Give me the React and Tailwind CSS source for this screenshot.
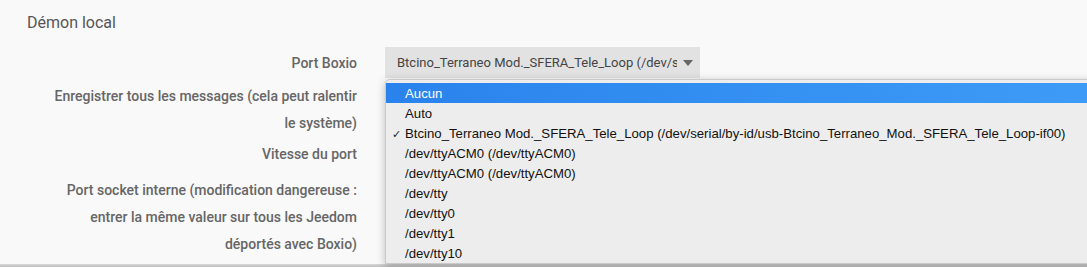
import { useState } from 'react'

const ports = [
  { label: 'Aucun', active: true },
  { label: 'Auto' },
  { label: 'Btcino_Terraneo Mod._SFERA_Tele_Loop (/dev/serial/by-id/usb-Btcino_Terraneo_Mod._SFERA_Tele_Loop-if00)', checked: true },
  { label: '/dev/ttyACM0 (/dev/ttyACM0)' },
  { label: '/dev/ttyACM0 (/dev/ttyACM0)' },
  { label: '/dev/tty' },
  { label: '/dev/tty0' },
  { label: '/dev/tty1' },
  { label: '/dev/tty10' },
]

function Label({ children, className = '' }) {
  return (
    <div className={`w-[306px] ml-[51px] text-right text-[14px] font-medium text-[#666] leading-[27px] ${className}`}>
      {children}
    </div>
  )
}

export default function App() {
  const [open] = useState(true)

  return (
    <div className="relative h-[267px] overflow-hidden bg-[#f9f9f9] font-['Roboto',sans-serif]">
      <h3 className="pl-[27px] pt-[11px] text-[16px] leading-[24px] text-[#555]">Démon local</h3>

      <div className="mt-[12px] flex items-center">
        <Label className="pt-[1px]">Port Boxio</Label>
        <div className="ml-[28px] flex h-[31px] w-[315px] items-center bg-[#e2e2e2] pl-[12px] pr-[7px]">
          <span className="flex-1 overflow-hidden whitespace-nowrap text-[13px] text-[#444]">
            Btcino_Terraneo Mod._SFERA_Tele_Loop (/dev/serial/by-id/usb-Btcino_Terraneo_Mod._SFERA_Tele_Loop-if00)
          </span>
          <svg width="10" height="6" viewBox="0 0 10 6" className="ml-[6px] shrink-0">
            <path d="M0 0h10L5 6z" fill="#666" />
          </svg>
        </div>
      </div>

      <Label className="mt-[5px]">Enregistrer tous les messages (cela peut ralentir le système)</Label>
      <Label className="mt-[4px]">Vitesse du port</Label>
      <Label className="mt-[9px]">Port socket interne (modification dangereuse : entrer la même valeur sur tous les Jeedom déportés avec Boxio)</Label>

      <div className="absolute bottom-0 left-0 right-0 h-[3px] bg-gradient-to-b from-[#d8d8d8] to-[#bdbdbd]" />

      {open && (
        <ul className="absolute left-[385px] top-[79px] w-[760px] rounded-tl-[5px] border border-[#c9c9c9] bg-[#ededed] pt-[3px] shadow-[0_2px_8px_rgba(0,0,0,0.25)] font-['Liberation_Sans',sans-serif]">
          {ports.map((p, i) => (
            <li
              key={i}
              className={`relative h-[20px] whitespace-nowrap pl-[19px] text-[13.2px] leading-[22px] ${p.active ? 'bg-gradient-to-r from-[#2a83ec] to-[#3f9df7] text-white' : 'text-[#111]'}`}
            >
              {p.checked && <span className="absolute left-[6px] top-0 text-[11px] text-[#222]">✓</span>}
              {p.label}
            </li>
          ))}
        </ul>
      )}
    </div>
  )
}
